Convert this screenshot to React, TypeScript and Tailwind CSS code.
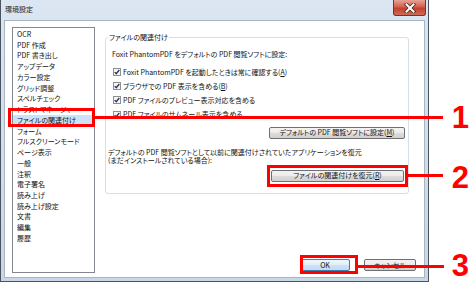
import React from "react";

const items = [
  "OCR",
  "PDF 作成",
  "PDF 書き出し",
  "アップデータ",
  "カラー設定",
  "グリッド調整",
  "スペルチェック",
  "トラストマネージャー",
  "ファイルの関連付け",
  "フォーム",
  "フルスクリーンモード",
  "ページ表示",
  "一般",
  "注釈",
  "電子署名",
  "読み上げ",
  "読み上げ設定",
  "文書",
  "編集",
  "履歴",
];

function Check() {
  return (
    <svg width="8" height="8" viewBox="0 0 8 8" className="shrink-0">
      <rect x="0.5" y="0.5" width="7" height="7" fill="#f6f6f6" stroke="#8e8f8f" />
      <path d="M1.7 4.1 L3.2 5.7 L6.3 2" fill="none" stroke="#21345e" strokeWidth="1.3" />
    </svg>
  );
}

const btn =
  "flex items-center justify-center h-[12px] border border-[#707070] rounded-[2px] bg-[linear-gradient(#f3f3f3,#ebebeb_50%,#dddddd_50%,#d0d0d0)] leading-none whitespace-nowrap";

export default function App() {
  return (
    <div className="relative w-[470px] h-[282px] bg-white overflow-hidden font-['Noto_Sans_CJK_JP',sans-serif] text-[7px] text-[#111] [font-feature-settings:'palt']">
      {/* Window */}
      <div className="w-[429px] h-[282px] border-x border-b border-[#4a545e] bg-[linear-gradient(#dbe6f2,#c8d6e5)] flex flex-col">
        {/* Title bar */}
        <div className="h-[17px] flex items-start justify-between">
          <span className="pl-[4px] pt-[5px] leading-[8px] text-[#1a1a1a]">環境設定</span>
          <div className="mr-[2px] w-[33px] h-[16px] rounded-b-[3px] border border-t-0 border-[#7e2f28] bg-[linear-gradient(#e6a396,#d4604f_45%,#c2402f_55%,#d26a55)] flex items-center justify-center">
            <svg width="12" height="10" viewBox="0 0 12 10">
              <path d="M2.5 1.5 L9.5 8.5 M9.5 1.5 L2.5 8.5" stroke="#4a2520" strokeWidth="3.6" strokeLinecap="square" />
              <path d="M2.5 1.5 L9.5 8.5 M9.5 1.5 L2.5 8.5" stroke="#ffffff" strokeWidth="2" strokeLinecap="square" />
            </svg>
          </div>
        </div>

        {/* Client */}
        <div className="mt-[3px] mx-[3px] h-[258px] border border-[#a9b5c2] bg-white flex pl-[7px] pt-[6px] pb-[4px] pr-[4px]">
          {/* List */}
          <div className="w-[83px] h-[246px] border border-[#828790] bg-white pt-[1px] shrink-0">
            {items.map((t, i) => (
              <div
                key={t}
                className={
                  "h-[10.74px] leading-[10.74px] pl-[4px] whitespace-nowrap " +
                  (i === 8 ? "bg-[#cde2f7]" : "")
                }
              >
                {t}
              </div>
            ))}
          </div>

          {/* Right column */}
          <div className="ml-[10px] flex-1 flex flex-col pt-[10px]">
            <div className="relative w-[304px] h-[157px] border border-[#d5dfe5] rounded-[3px] flex flex-col">
              <span className="absolute -top-[5.5px] left-[2px] px-[1px] bg-white leading-[9px]">
                ファイルの関連付け
              </span>
              <div className="mt-[12px] ml-[6px] h-[9px] leading-[9px] whitespace-nowrap">
                Foxit PhantomPDF をデフォルトの PDF 閲覧ソフトに設定:
              </div>
              <div className="mt-[6px] flex flex-col">
                <div className="h-[14.2px] flex items-center pl-[7px] gap-[2px] whitespace-nowrap">
                  <Check />
                  <span>
                    Foxit PhantomPDF を起動したときは常に確認する(<span className="underline">A</span>)
                  </span>
                </div>
                <div className="h-[14.2px] flex items-center pl-[7px] gap-[2px] whitespace-nowrap">
                  <Check />
                  <span>
                    ブラウザでの PDF 表示を含める(<span className="underline">B</span>)
                  </span>
                </div>
                <div className="h-[14.2px] flex items-center pl-[7px] gap-[2px] whitespace-nowrap">
                  <Check />
                  <span>PDF ファイルのプレビュー表示対応を含める</span>
                </div>
                <div className="h-[14.2px] flex items-center pl-[7px] gap-[2px] whitespace-nowrap">
                  <Check />
                  <span>PDF ファイルのサムネール表示を含める</span>
                </div>
              </div>
              <div className={btn + " mt-[5px] self-end mr-[3px] w-[136px]"}>
                デフォルトの PDF 閲覧ソフトに設定(<span className="underline">M</span>)
              </div>
              <div className="mt-[8.75px] pl-[2px] leading-[8.5px] whitespace-nowrap">
                <div>デフォルトの PDF 閲覧ソフトとして以前に関連付けされていたアプリケーションを復元</div>
                <div>(まだインストールされている場合):</div>
              </div>
              <div className={btn + " mt-[5px] self-end mr-[4px] w-[133px]"}>
                ファイルの関連付けを復元(<span className="underline">R</span>)
              </div>
            </div>

            <div className="mt-auto mb-[2px] mr-[4px] flex justify-end gap-[14px]">
              <div className="flex items-center justify-center w-[50px] h-[12px] border border-[#3c7fb1] rounded-[2px] bg-[linear-gradient(#eef6fc,#e0eef9_50%,#cfe3f4_50%,#c2daf0)] leading-none">
                OK
              </div>
              <div className={btn + " w-[52px]"}>キャンセル</div>
            </div>
          </div>
        </div>
      </div>

      {/* Annotations */}
      <div className="absolute left-[8px] top-[108px] w-[87px] h-[19px] border-[3px] border-[#f00]" />
      <div className="absolute left-[95px] top-[116px] w-[348px] h-[3px] bg-[#f00]" />
      <div className="absolute left-[267px] top-[165px] w-[141px] h-[22px] border-[3px] border-[#f00]" />
      <div className="absolute left-[408px] top-[174px] w-[35px] h-[3px] bg-[#f00]" />
      <div className="absolute left-[300px] top-[255px] w-[58px] h-[19px] border-[3px] border-[#f00]" />
      <div className="absolute left-[358px] top-[265px] w-[86px] h-[3px] bg-[#f00]" />

      <div className="absolute left-[440px] top-[105px] w-[29px] text-right font-['Liberation_Sans',sans-serif] font-bold text-[31px] leading-[26px] text-[#f00]">
        1
      </div>
      <div className="absolute left-[440px] top-[165px] w-[29px] text-right font-['Liberation_Sans',sans-serif] font-bold text-[31px] leading-[26px] text-[#f00]">
        2
      </div>
      <div className="absolute left-[440px] top-[253px] w-[29px] text-right font-['Liberation_Sans',sans-serif] font-bold text-[31px] leading-[26px] text-[#f00]">
        3
      </div>
    </div>
  );
}
